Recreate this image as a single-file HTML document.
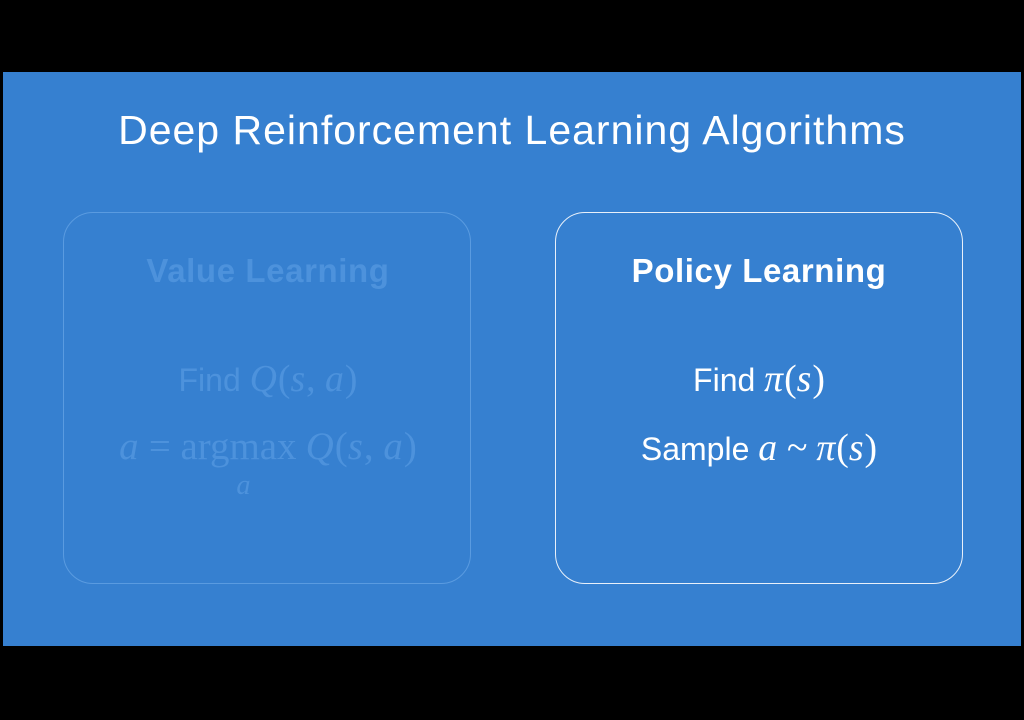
<!DOCTYPE html>
<html><head><style>
body{margin:0;width:1024px;height:720px;background:#000;position:relative;overflow:hidden;font-family:"Liberation Sans",sans-serif}
.slide{position:absolute;left:3px;top:72px;width:1018px;height:574px;background:#3680d0}
.t{position:absolute;left:0;width:1024px;text-align:center;color:#fff;white-space:nowrap}
.box{position:absolute;top:212px;width:408px;height:372px;border-radius:30px;box-sizing:border-box}
.m{font-family:"Liberation Serif",serif;font-style:italic;font-size:1.18em;letter-spacing:1px}
.r{font-family:"Liberation Serif",serif;font-size:1.18em}
</style></head><body>
<div class="slide"></div>
<div class="t" style="top:107px;font-size:41px;letter-spacing:1.0px">Deep Reinforcement Learning Algorithms</div>
<div class="box" style="left:63px;border:1.5px solid #5a9be0"></div>
<div class="box" style="left:555px;border:1.5px solid #e8f0fa"></div>
<div class="t" style="left:-244px;top:252px;font-size:33px;font-weight:bold;color:#4d92dc;letter-spacing:0.6px">Value Learning</div>
<div class="t" style="left:-244px;top:357px;font-size:32px;color:#4d92dc">Find <span class="m">Q</span><span class="r">(</span><span class="m">s</span><span class="r">, </span><span class="m">a</span><span class="r">)</span></div>
<div class="t" style="left:-244px;top:424px;font-size:33px;color:#4d92dc"><span class="m">a</span> <span class="r">= argmax</span> <span class="m">Q</span><span class="r">(</span><span class="m">s</span><span class="r">, </span><span class="m">a</span><span class="r">)</span></div>
<div class="t" style="left:-268px;top:470px;font-size:24px;color:#4d92dc"><span class="m">a</span></div>
<div class="t" style="left:247px;top:252px;font-size:33px;font-weight:bold;letter-spacing:0.6px">Policy Learning</div>
<div class="t" style="left:247px;top:357px;font-size:32px">Find <span class="m">π</span><span class="r">(</span><span class="m">s</span><span class="r">)</span></div>
<div class="t" style="left:247px;top:426px;font-size:32px">Sample <span class="m">a</span> <span class="r">~</span> <span class="m">π</span><span class="r">(</span><span class="m">s</span><span class="r">)</span></div>
</body></html>
